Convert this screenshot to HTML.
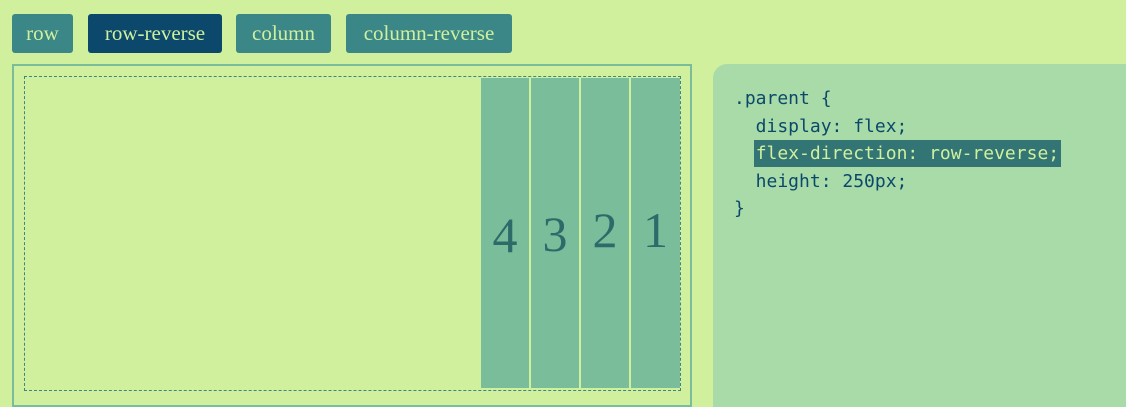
<!DOCTYPE html><html><head><style>
html,body{margin:0;width:1126px;height:407px;overflow:hidden}
body{background:#d0f09e;position:relative;font-family:"Liberation Serif",serif}
.b{position:absolute;top:14px;height:39px;border-radius:3px;background:#3b8686;color:#cff09e;font-size:21px;line-height:39px;text-align:center;white-space:nowrap}
.outer{position:absolute;left:12px;top:64px;width:676px;height:339px;border:2px solid #79bd9a}
.inner{position:absolute;left:24px;top:76px;width:655px;height:313px;border:1px dashed #3b8686}
.it{position:absolute;top:78px;height:310px;width:48px;background:#79bd9a;color:#2f6a6a;font-size:50px;text-align:center}
.code{position:absolute;left:713px;top:64px;width:430px;height:360px;background:#a8dba8;border-radius:14px}
pre{position:absolute;left:734px;top:85px;margin:0;font-family:"DejaVu Sans Mono","Liberation Mono",monospace;font-size:18px;line-height:27.5px;color:#0b486b}
.h{background:#337575;color:#cff09e;padding:3px 2px;margin-left:-2px}
</style></head><body>
<div class="b" style="left:12px;width:61px">row</div>
<div class="b" style="left:88px;width:134px;background:#0b486b">row-reverse</div>
<div class="b" style="left:236px;width:95px">column</div>
<div class="b" style="left:346px;width:166px">column-reverse</div>
<div class="outer"></div><div class="inner"></div>
<div class="it" style="left:481px"><span style="position:absolute;left:0;right:0;top:128px">4</span></div>
<div class="it" style="left:531px"><span style="position:absolute;left:0;right:0;top:127px">3</span></div>
<div class="it" style="left:581px"><span style="position:absolute;left:0;right:0;top:123px">2</span></div>
<div class="it" style="left:631px;width:49px"><span style="position:absolute;left:0;right:0;top:123px">1</span></div>
<div class="code"></div>
<pre>.parent {
  display: flex;
  <span class="h">flex-direction: row-reverse;</span>
  height: 250px;
}</pre>
</body></html>
